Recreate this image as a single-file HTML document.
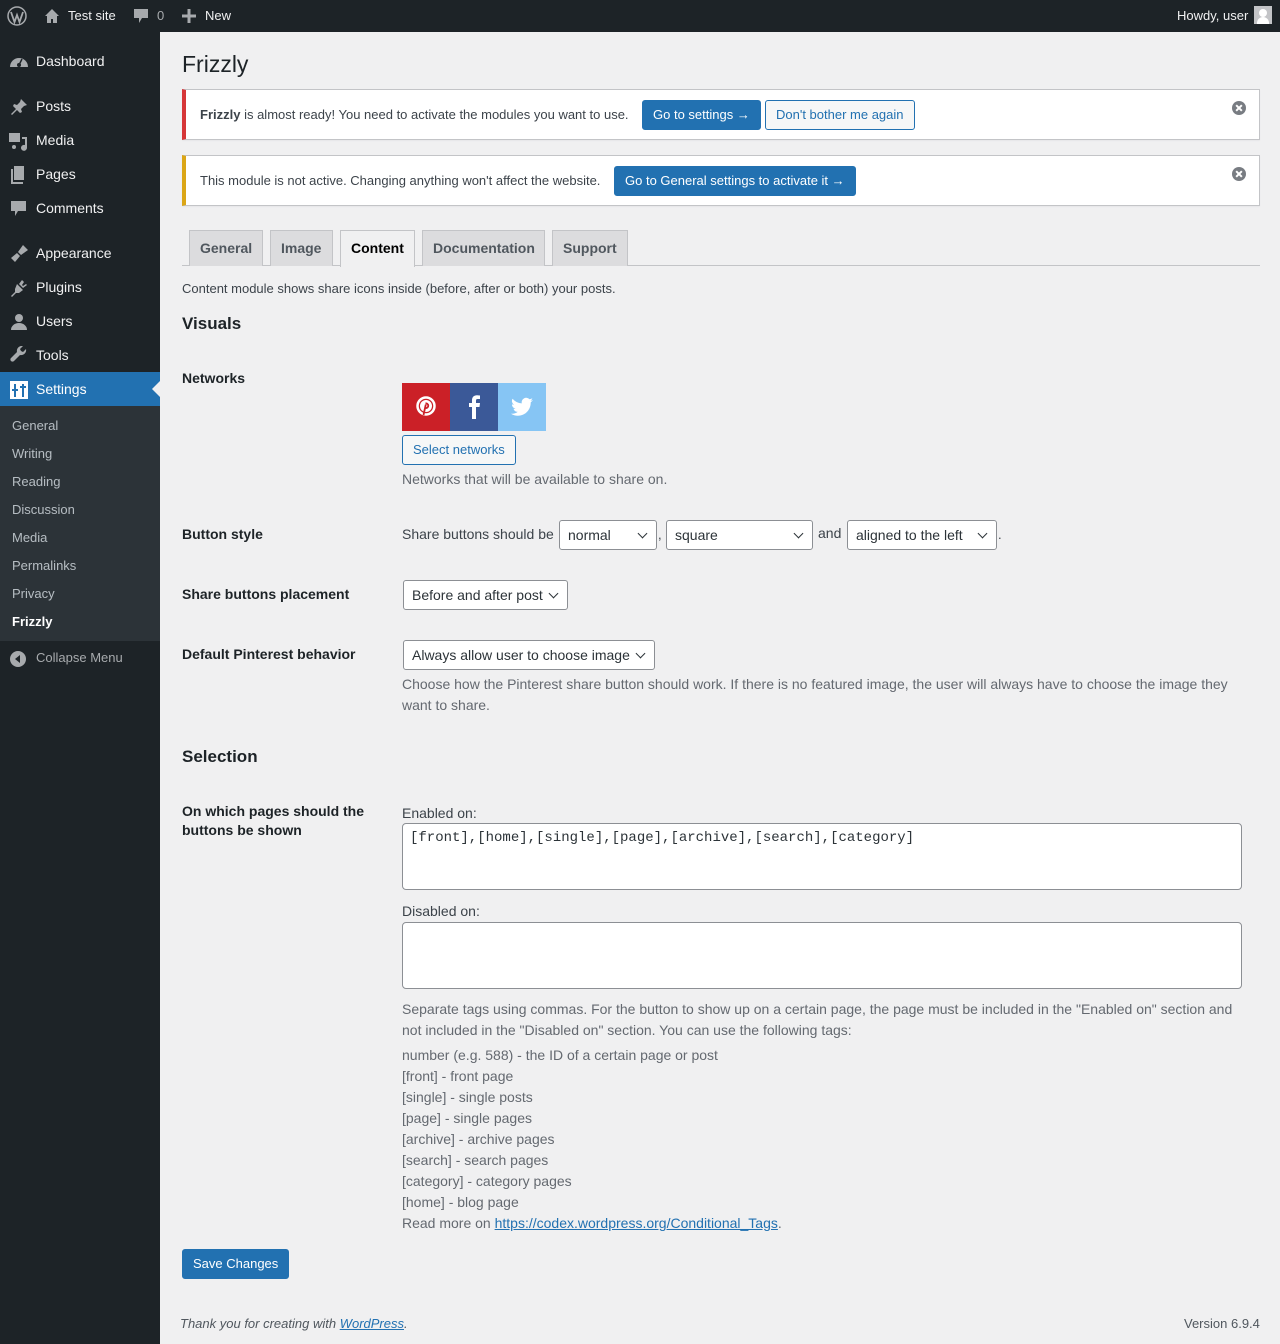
<!DOCTYPE html>
<html><head><meta charset="utf-8"><style>
*{box-sizing:border-box;margin:0;padding:0}
body{width:1280px;height:1344px;background:#f0f0f1;font-family:"Liberation Sans",Arial,sans-serif;font-size:13px;color:#3c434a;position:relative;overflow:hidden}
.a{position:absolute;white-space:nowrap}
#bar{position:absolute;left:0;top:0;width:1280px;height:32px;background:#1d2327;color:#f0f0f1}
#side{position:absolute;left:0;top:32px;width:160px;height:1312px;background:#1d2327}
.mi{position:absolute;left:0;width:160px;height:34px;color:#f0f0f1;font-size:14px}
.mi span{position:absolute;left:36px;top:9px}
.mi svg{position:absolute;left:9px;top:8px}
.sub{position:absolute;left:12px;font-size:13px;color:rgba(240,246,252,.7)}
.notice{position:absolute;left:182px;width:1078px;background:#fff;border:1px solid #c3c4c7;border-left-width:4px;box-shadow:0 1px 1px rgba(0,0,0,.04)}
.btn{position:absolute;height:30px;line-height:28px;padding:0 10px;border-radius:3px;font-size:13px;white-space:nowrap}
.bp{background:#2271b1;color:#fff;border:1px solid #2271b1}
.bs{background:#f6f7f7;color:#2271b1;border:1px solid #2271b1}
.tab{position:absolute;top:230px;height:36px;background:#dcdcde;border:1px solid #c3c4c7;border-bottom:none;font-size:14px;font-weight:bold;color:#50575e;padding:9px 10px 0}
.lbl{position:absolute;left:182px;font-size:14px;font-weight:bold;color:#1d2327;line-height:25px}
.d{position:absolute;left:402px;font-size:14px;color:#646970;line-height:21px}
.sel{position:absolute;height:30px;background:#fff;border:1px solid #8c8f94;border-radius:3px;font-size:14px;color:#2c3338;padding:6px 24px 0 8px;white-space:nowrap}
.sel:after{content:"";position:absolute;right:10px;top:9px;width:6px;height:6px;border-right:1.5px solid #2c3338;border-bottom:1.5px solid #2c3338;transform:rotate(45deg)}
.ta{position:absolute;left:402px;width:840px;height:67px;background:#fff;border:1px solid #8c8f94;border-radius:4px;font-family:"Liberation Mono",monospace;font-size:14px;color:#2c3338;padding:6px 7px}
.x{position:absolute;right:13px;top:11px;width:14px;height:14px;border-radius:50%;background:#787c82}
.x:before,.x:after{content:"";position:absolute;left:6px;top:3px;width:2px;height:8px;background:#fff;transform:rotate(45deg)}
.x:after{transform:rotate(-45deg)}
</style></head><body>
<div id="bar">
<svg class="a" style="left:7px;top:6px" width="20" height="20" viewBox="0 0 20 20"><circle cx="10" cy="10" r="9" fill="none" stroke="#a7aaad" stroke-width="1.5"/><path d="M4 6l3.5 10 2.5-7 2.5 7L16 6" fill="none" stroke="#a7aaad" stroke-width="1.8"/></svg>
<svg class="a" style="left:44px;top:8px" width="16" height="16" viewBox="0 0 16 16"><path d="M8 1L1 8h2v7h4v-4h2v4h4V8h2z" fill="#a7aaad"/></svg>
<span class="a" style="left:68px;top:8px;font-size:13px">Test site</span>
<svg class="a" style="left:133px;top:8px" width="16" height="17" viewBox="0 0 16 17"><path d="M1 1h14v9H9l-3 5v-5H1z" fill="#a7aaad"/></svg>
<span class="a" style="left:157px;top:8px;color:#a7aaad">0</span>
<svg class="a" style="left:182px;top:9px" width="14" height="14"><path d="M7 0v14M0 7h14" stroke="#a7aaad" stroke-width="3"/></svg>
<span class="a" style="left:205px;top:8px">New</span>
<span class="a" style="left:1177px;top:8px">Howdy, user</span>
<div class="a" style="left:1254px;top:6px;width:18px;height:18px;background:#c3c4c7"><div style="position:absolute;left:5px;top:3px;width:8px;height:8px;border-radius:50%;background:#fff"></div><div style="position:absolute;left:3px;top:11px;width:12px;height:7px;border-radius:6px 6px 0 0;background:#fff"></div></div>
</div>
<div id="side">
<div class="mi" style="top:12px"><svg width="20" height="20"><path d="M1 15a9 9 0 0 1 18 0z" fill="#a7aaad"/><circle cx="10" cy="13" r="2" fill="#1d2327"/><path d="M10 13l3-6" stroke="#1d2327" stroke-width="1.5"/></svg><span>Dashboard</span></div>
<div class="mi" style="top:57px"><svg width="20" height="20"><path d="M12 2l6 6-3 1-3 3 1 3-2 1-3-3-5 5-1-1 5-5-3-3 1-2 3 1 3-3z" fill="#a7aaad"/></svg><span>Posts</span></div>
<div class="mi" style="top:91px"><svg width="20" height="20"><rect x="0" y="2" width="11" height="9" fill="#a7aaad"/><path d="M13 6h5v11a3 3 0 1 1-2-3V8h-3z" fill="#a7aaad"/><circle cx="5" cy="16" r="2" fill="#a7aaad"/></svg><span>Media</span></div>
<div class="mi" style="top:125px"><svg width="20" height="20"><path d="M5 1h10v14H5z M2 4h2v13h10v2H2z" fill="#a7aaad"/></svg><span>Pages</span></div>
<div class="mi" style="top:159px"><svg width="20" height="20"><path d="M2 2h15v10H9l-3 5v-5H2z" fill="#a7aaad"/></svg><span>Comments</span></div>
<div class="mi" style="top:204px"><svg width="20" height="20"><path d="M14 1l5 5-7 5-3-3zM8 9l3 3-5 6-4-4z" fill="#a7aaad"/></svg><span>Appearance</span></div>
<div class="mi" style="top:238px"><svg width="20" height="20"><path d="M13 2l-3 4 4 4 4-3-1-1-3 2-1-1 2-3zM8 6l6 6-4 3-3 0-4 4-1-1 4-4 0-3z" fill="#a7aaad"/></svg><span>Plugins</span></div>
<div class="mi" style="top:272px"><svg width="20" height="20"><circle cx="10" cy="6" r="4" fill="#a7aaad"/><path d="M2 18a8 7 0 0 1 16 0z" fill="#a7aaad"/></svg><span>Users</span></div>
<div class="mi" style="top:306px"><svg width="20" height="20"><path d="M17 3l-3 3-2-1-1-2 3-3a5 5 0 0 0-6 6L2 12a2 2 0 0 0 3 3l6-6a5 5 0 0 0 6-6z" fill="#a7aaad"/></svg><span>Tools</span></div>
<div class="mi" style="top:340px;background:#2271b1;color:#fff"><svg width="20" height="20"><rect x="1" y="1" width="18" height="18" fill="#fff"/><path d="M6 4v13M3 10h6M14 4v13M11 7h6" stroke="#2271b1" stroke-width="2"/></svg><span>Settings</span>
<div style="position:absolute;right:0;top:9px;width:0;height:0;border:8px solid transparent;border-right-color:#f0f0f1"></div></div>
<div style="position:absolute;left:0;top:374px;width:160px;height:235px;background:#2c3338"></div>
<div class="sub" style="top:386px">General</div>
<div class="sub" style="top:414px">Writing</div>
<div class="sub" style="top:442px">Reading</div>
<div class="sub" style="top:470px">Discussion</div>
<div class="sub" style="top:498px">Media</div>
<div class="sub" style="top:526px">Permalinks</div>
<div class="sub" style="top:554px">Privacy</div>
<div class="sub" style="top:582px;color:#fff;font-weight:bold">Frizzly</div>
<svg class="a" style="left:10px;top:619px" width="16" height="16"><circle cx="8" cy="8" r="8" fill="#a7aaad"/><path d="M10 4L5 8l5 4z" fill="#1d2327"/></svg>
<div class="sub" style="top:618px;left:36px;color:#a7aaad">Collapse Menu</div>
</div>

<div class="a" style="left:182px;top:51px;font-size:23px;color:#1d2327">Frizzly</div>

<div class="notice" style="top:89px;height:51px;border-left-color:#d63638">
<span class="a" style="left:14px;top:17px"><b>Frizzly</b> is almost ready! You need to activate the modules you want to use.</span>
<div class="x"></div></div>
<div class="btn bp" style="left:642px;top:100px">Go to settings →</div>
<div class="btn bs" style="left:765px;top:100px">Don't bother me again</div>

<div class="notice" style="top:155px;height:51px;border-left-color:#dba617">
<span class="a" style="left:14px;top:17px">This module is not active. Changing anything won't affect the website.</span>
<div class="x"></div></div>
<div class="btn bp" style="left:614px;top:166px">Go to General settings to activate it →</div>

<div class="a" style="left:182px;top:265px;width:1078px;height:1px;background:#c3c4c7"></div>
<div class="tab" style="left:189px;width:74px">General</div>
<div class="tab" style="left:270px;width:63px">Image</div>
<div class="tab" style="left:340px;width:75px;height:37px;background:#f0f0f1;color:#000">Content</div>
<div class="tab" style="left:422px;width:123px">Documentation</div>
<div class="tab" style="left:552px;width:76px">Support</div>

<div class="a" style="left:182px;top:281px">Content module shows share icons inside (before, after or both) your posts.</div>
<div class="a" style="left:182px;top:314px;font-size:17px;font-weight:bold;color:#1d2327">Visuals</div>

<div class="lbl" style="top:366px">Networks</div>
<div class="a" style="left:402px;top:383px;width:48px;height:48px;background:#cb2027">
<svg style="position:absolute;left:14px;top:13px" width="20" height="22" viewBox="0 0 20 22"><circle cx="10" cy="10" r="8.5" fill="none" stroke="#fff" stroke-width="2.5"/><circle cx="10" cy="10" r="6" fill="#fff"/><path d="M9.5 7.5a2.3 2.3 0 1 1 0 4.5" fill="none" stroke="#cb2027" stroke-width="1.8"/><path d="M9.8 8.5L7.5 19" stroke="#cb2027" stroke-width="1.8"/></svg></div>
<div class="a" style="left:450px;top:383px;width:48px;height:48px;background:#3b5998">
<svg style="position:absolute;left:17px;top:12px" width="14" height="24"><path d="M9 24V12h3.5l.5-4H9V5.5C9 4.5 9.5 4 10.5 4H13V0.5C12 0.3 11 0.2 10 0.2 7 0.2 5 2 5 5.2V8H2v4h3v12z" fill="#fff"/></svg></div>
<div class="a" style="left:498px;top:383px;width:48px;height:48px;background:#86c5f4">
<svg style="position:absolute;left:13px;top:14px" width="22" height="20" viewBox="0 0 24 20"><path d="M24 2.4a10 10 0 0 1-2.8.8A5 5 0 0 0 23.3.4a10 10 0 0 1-3.1 1.2 4.9 4.9 0 0 0-8.4 4.5A14 14 0 0 1 1.7 1a4.9 4.9 0 0 0 1.5 6.6 5 5 0 0 1-2.2-.6 4.9 4.9 0 0 0 3.9 4.8 5 5 0 0 1-2.2.1 4.9 4.9 0 0 0 4.6 3.4A9.9 9.9 0 0 1 0 17.3 14 14 0 0 0 7.5 19.5c9 0 14-7.5 14-14v-.6A10 10 0 0 0 24 2.4z" fill="#fff"/></svg></div>
<div class="btn bs" style="left:402px;top:435px">Select networks</div>
<div class="d" style="top:469px">Networks that will be available to share on.</div>

<div class="lbl" style="top:522px">Button style</div>
<div class="d" style="top:524px;color:#3c434a">Share buttons should be</div>
<div class="sel" style="left:559px;top:520px;width:98px">normal</div>
<span class="a" style="left:658px;top:527px">,</span>
<div class="sel" style="left:666px;top:520px;width:147px">square</div>
<span class="a" style="left:818px;top:525px;font-size:14px">and</span>
<div class="sel" style="left:847px;top:520px;width:150px">aligned to the left</div>
<span class="a" style="left:998px;top:527px">.</span>

<div class="lbl" style="top:582px">Share buttons placement</div>
<div class="sel" style="left:403px;top:580px;width:165px">Before and after post</div>

<div class="lbl" style="top:642px">Default Pinterest behavior</div>
<div class="sel" style="left:403px;top:640px;width:252px">Always allow user to choose image</div>
<div class="d" style="top:674px;width:840px;white-space:normal">Choose how the Pinterest share button should work. If there is no featured image, the user will always have to choose the image they want to share.</div>

<div class="a" style="left:182px;top:747px;font-size:17px;font-weight:bold;color:#1d2327">Selection</div>
<div class="lbl" style="top:802px;white-space:normal;width:200px;line-height:19px">On which pages should the buttons be shown</div>
<div class="d" style="top:803px;color:#3c434a">Enabled on:</div>
<div class="ta" style="top:823px">[front],[home],[single],[page],[archive],[search],[category]</div>
<div class="d" style="top:901px;color:#3c434a">Disabled on:</div>
<div class="ta" style="top:922px"></div>
<div class="d" style="top:999px;width:850px;white-space:normal">Separate tags using commas. For the button to show up on a certain page, the page must be included in the "Enabled on" section and not included in the "Disabled on" section. You can use the following tags:</div>
<div class="d" style="top:1045px">number (e.g. 588) - the ID of a certain page or post<br>[front] - front page<br>[single] - single posts<br>[page] - single pages<br>[archive] - archive pages<br>[search] - search pages<br>[category] - category pages<br>[home] - blog page<br>Read more on <span style="color:#2271b1;text-decoration:underline">https://codex.wordpress.org/Conditional_Tags</span>.</div>

<div class="btn bp" style="left:182px;top:1249px">Save Changes</div>
<div class="a" style="left:180px;top:1316px;font-style:italic;color:#50575e">Thank you for creating with <span style="color:#2271b1;text-decoration:underline">WordPress</span>.</div>
<div class="a" style="left:1184px;top:1316px;color:#50575e">Version 6.9.4</div>
</body></html>
